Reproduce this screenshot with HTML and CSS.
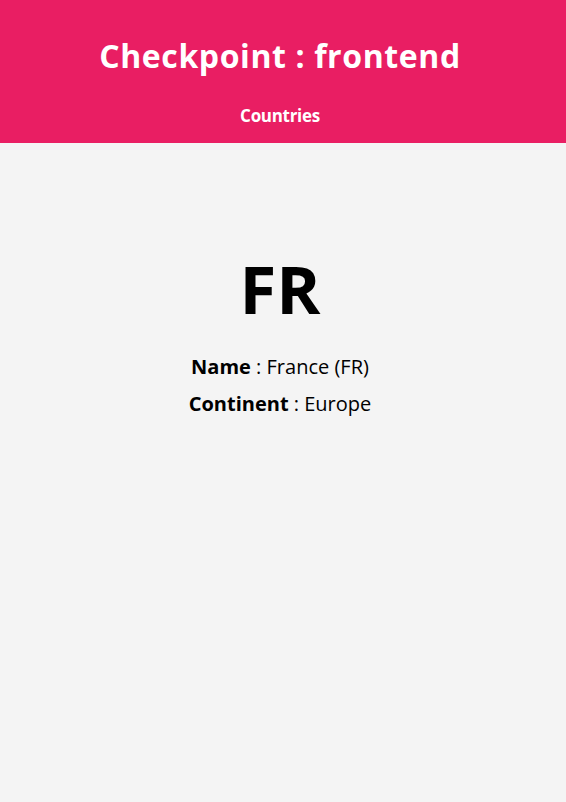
FILE: index.html
```html
<!DOCTYPE html>
<html lang="en">
<head>
<meta charset="utf-8">
<title>Checkpoint : frontend</title>
<link rel="stylesheet" href="styles.css">
</head>
<body>
<header class="site-header">
  <h1 class="site-title">Checkpoint : frontend</h1>
  <nav class="site-nav"><a class="nav-link" href="#">Countries</a></nav>
</header>
<main class="country">
  <h2 class="country-code">FR</h2>
  <p class="country-row first"><strong>Name</strong> : France (FR)</p>
  <p class="country-row"><strong>Continent</strong> : Europe</p>
</main>
</body>
</html>
```
FILE: styles.css
```css
html, body {
  margin: 0;
  padding: 0;
}
body {
  background: #f4f4f4;
  font-family: "Open Sans", "Noto Sans", "Liberation Sans", sans-serif;
  color: #000;
  min-height: 802px;
}
.site-header {
  background: #e91e63;
  color: #fff;
  height: 143px;
  box-sizing: border-box;
  padding: 35px 6px 0 0;
  display: flex;
  flex-direction: column;
  align-items: center;
}
.site-title {
  margin: 0;
  font-size: 32px;
  line-height: 42px;
  font-weight: 700;
  letter-spacing: 0.6px;
}
.site-nav {
  margin-top: 28px;
}
.nav-link {
  color: #fff;
  text-decoration: none;
  font-weight: 700;
  font-size: 17px;
  line-height: 20px;
  letter-spacing: -0.3px;
}
.country {
  display: flex;
  flex-direction: column;
  align-items: center;
  padding: 100px 6px 0 0;
}
.country-code {
  margin: 0;
  font-size: 67px;
  line-height: 90px;
  font-weight: 700;
}
.country-row {
  margin: 0;
  font-size: 20px;
  line-height: 37px;
}
.country-row.first {
  margin-top: 15px;
}
.country-row strong {
  font-weight: 700;
}
```
